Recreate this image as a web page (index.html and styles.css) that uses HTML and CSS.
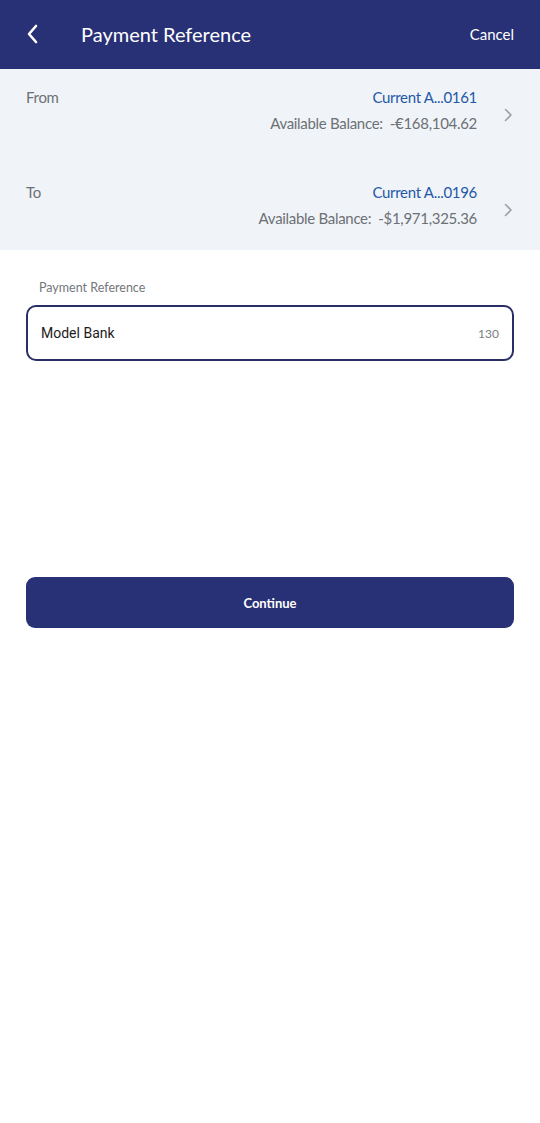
FILE: index.html
```html
<!DOCTYPE html>
<html lang="en">
  <head>
    <title>Payment Reference</title>
    <link rel="stylesheet" href="styles.css">
  </head>

  <body>
    <header class="topbar">
      <button type="button" class="back" aria-label="Back">
        <svg width="14" height="20" viewBox="0 0 14 20" fill="none" stroke="currentColor" stroke-width="2.6" stroke-linecap="round" stroke-linejoin="round">
          <path d="M10 2 3 10l7 8" />
        </svg>
      </button>
      <h1>Payment Reference</h1>
      <button type="button" class="cancel">Cancel</button>
    </header>

    <section class="accounts">
      <div class="account account-from">
        <span class="account-label">From</span>
        <div class="account-info">
          <span class="account-name">Current A...0161</span>
          <span class="account-balance">Available Balance:&nbsp; -€168,104.62</span>
        </div>
        <svg class="chevron" width="10" height="14" viewBox="0 0 10 14" fill="none" stroke="currentColor" stroke-width="1.6" stroke-linecap="round" stroke-linejoin="round">
          <path d="m2.5 1.5 5.5 5.5-5.5 5.5" />
        </svg>
      </div>
      <div class="account account-to">
        <span class="account-label">To</span>
        <div class="account-info">
          <span class="account-name">Current A...0196</span>
          <span class="account-balance">Available Balance:&nbsp; -$1,971,325.36</span>
        </div>
        <svg class="chevron" width="10" height="14" viewBox="0 0 10 14" fill="none" stroke="currentColor" stroke-width="1.6" stroke-linecap="round" stroke-linejoin="round">
          <path d="m2.5 1.5 5.5 5.5-5.5 5.5" />
        </svg>
      </div>
    </section>

    <main class="form">
      <label class="field-label" for="reference">Payment Reference</label>
      <div class="field">
        <input id="reference" type="text" value="Model Bank">
        <span class="counter">130</span>
      </div>
      <button type="button" class="continue">Continue</button>
    </main>
  </body>
</html>
```

FILE: styles.css
```css
* {
  box-sizing: border-box;
}

body {
  margin: 0;
  background-color: #fff;
  font-family: "Source Sans Pro", Lato, "Noto Sans", sans-serif;
  color: #6d7075;
}

.topbar {
  display: flex;
  align-items: center;
  block-size: 69px;
  padding: 0 26px 2px;
  background-color: #283076;
  color: #fff;

  h1 {
    flex: 1;
    margin: 0 0 0 41px;
    font-size: 20px;
    font-weight: 400;
  }

  button {
    border: 0;
    padding: 0;
    background: transparent;
    color: inherit;
    font: inherit;
    cursor: pointer;
  }

  .back {
    display: flex;
    inline-size: 14px;
  }

  .cancel {
    font-size: 15px;
  }
}

.accounts {
  background-color: #f0f4f8;
}

.account {
  display: flex;
  align-items: flex-start;
  padding-inline: 26px 27px;
  font-size: 15px;
  letter-spacing: -0.3px;

  .account-label {
    flex: 1;
  }

  .account-info {
    display: flex;
    flex-flow: column;
    align-items: flex-end;
    gap: 8px;
  }

  .account-name {
    color: #1f58a6;
  }

  .chevron {
    margin: 20px 0 0 26px;
    color: #9da0a5;
  }
}

.account-from {
  block-size: 95px;
  padding-block-start: 19px;
}

.account-to {
  block-size: 86px;
  padding-block-start: 19px;
}

.form {
  display: flex;
  flex-flow: column;
  padding: 30px 26px;
}

.field-label {
  margin-inline-start: 13px;
  font-size: 12.5px;
  color: #73767b;
}

.field {
  display: flex;
  align-items: center;
  margin-block-start: 10px;
  block-size: 56px;
  padding-inline: 13px;
  border: 2px solid #2a2e66;
  border-radius: 10px;

  input {
    flex: 1;
    border: 0;
    padding: 0;
    outline: 0;
    background: transparent;
    font-family: Roboto, sans-serif;
    font-size: 14px;
    color: #1c1c1c;
  }

  .counter {
    font-size: 12px;
    color: #7a7d82;
  }
}

.continue {
  margin-block-start: 216px;
  block-size: 51px;
  border: 0;
  border-radius: 9px;
  background-color: #283076;
  color: #fff;
  font-family: inherit;
  font-size: 13px;
  font-weight: 700;
  cursor: pointer;
}
```
